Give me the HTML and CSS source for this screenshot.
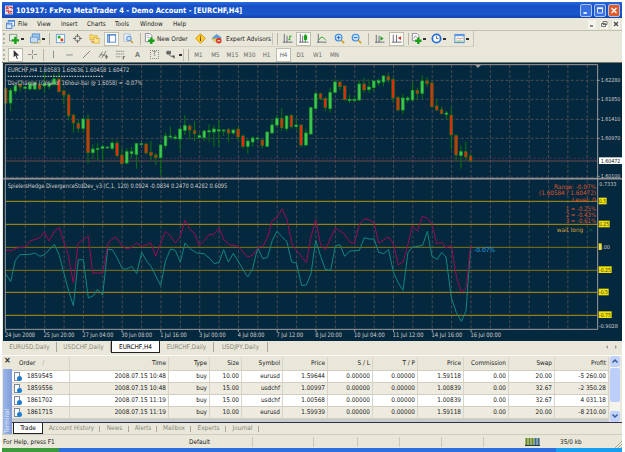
FILE: index.html
```html
<!DOCTYPE html>
<html lang="en">
<head>
    <meta charset="UTF-8">
    <title>101917: FxPro MetaTrader 4 - Demo Account - [EURCHF,H4]</title>
    <link rel="stylesheet" href="styles.css">
</head>
<body>
<div class="window">
    <div class="titlebar">
        <svg class="app-icon" viewBox="0 0 9 10"><rect width="9" height="10" fill="#e8e0f0"/><path d="M1 1l3 3M4 1L1 4M5 2h3v2M1 6h3v3M5 6l3 3M8 6L5 9" stroke="#d83a30" stroke-width="1.3" fill="none"/></svg>
        <span class="title">101917: FxPro MetaTrader 4 - Demo Account - [EURCHF,H4]</span>
        <div class="win-buttons">
            <span class="win-btn"><svg viewBox="0 0 12 12"><path d="M3 9h4" stroke="#fff" stroke-width="2"/></svg></span>
            <span class="win-btn"><svg viewBox="0 0 12 12"><path d="M3 3.5h6v5.5H3z" stroke="#fff" fill="none"/><path d="M2.5 3h7" stroke="#fff" stroke-width="1.5"/></svg></span>
            <span class="win-btn close"><svg viewBox="0 0 12 12"><path d="M3 3l6 6M9 3L3 9" stroke="#fff" stroke-width="1.6"/></svg></span>
        </div>
    </div>

    <div class="menubar">
        <svg class="menu-icon" viewBox="0 0 10 10"><rect x="2.5" y=".5" width="7" height="6" fill="#fff" stroke="#4a86d8"/><rect x=".5" y="3.5" width="6" height="6" fill="#d8e8fa" stroke="#4a86d8"/><path d="M1 4.5h5M3 1.5h6" stroke="#4a86d8"/></svg>
        <span class="m-file">File</span>
        <span class="m-view">View</span>
        <span class="m-insert">Insert</span>
        <span class="m-charts">Charts</span>
        <span class="m-tools">Tools</span>
        <span class="m-window">Window</span>
        <span class="m-help">Help</span>
        <div class="mdi-buttons">
            <span><svg viewBox="0 0 8 8"><path d="M2 6h3" stroke="#444" stroke-width="1.2"/></svg></span>
            <span><svg viewBox="0 0 8 8"><path d="M3 1.5h4v3H3zM1.5 3.500h4v3h-4z" stroke="#555" stroke-width=".8" fill="none"/></svg></span>
            <span><svg viewBox="0 0 8 8"><path d="M2 2l4 4M6 2L2 6" stroke="#444" stroke-width="1.2"/></svg></span>
        </div>
    </div>

    <div class="toolbar main">
        <i class="grip"></i>
        <span class="slot w12"><svg viewBox="0 0 12 12"><rect x=".5" y="1.500" width="8" height="7" fill="#e4f0e4" stroke="#8a9a8a"/><path d="M7 4v8M3 8h8" stroke="#18a018" stroke-width="2.6"/></svg></span>
        <i class="caret"></i>
        <span class="slot w12 gap-l"><svg viewBox="0 0 12 12"><rect x="2.500" y="1" width="8" height="6" fill="#9cc4f0" stroke="#5a90d0"/><rect x=".5" y="4.500" width="8" height="6" fill="#c0dcf8" stroke="#6a98c8"/><path d="M2 11h9V6" stroke="#d0b870" fill="none"/></svg></span>
        <i class="caret"></i>
        <i class="sep"></i>
        <span class="slot"><svg viewBox="0 0 12 12"><rect x="1.500" y="1.500" width="9" height="9" fill="#fff" stroke="#6aa0e0"/><rect x="3" y="3" width="3" height="3" fill="#28b028"/><rect x="6" y="6" width="3" height="3" fill="#e04020"/></svg></span>
        <span class="slot"><svg viewBox="0 0 12 12"><circle cx="6" cy="6" r="3" fill="none" stroke="#666"/><path d="M6 1v3.500M6 7.500V11M1 6h3.500M7.500 6H11" stroke="#666"/></svg></span>
        <span class="slot"><svg viewBox="0 0 12 12"><path d="M1 2h3l1 1h4v4H1z" fill="#f8e070" stroke="#d8a020" stroke-width=".7"/><path d="M5 5h2l1 1h3v5H5z" fill="#ffe890" stroke="#d89020" stroke-width=".7"/><path d="M2 8l1 1.500 1.500.2L3.500 11" stroke="#e07820" fill="none"/></svg></span>
        <span class="slot"><b class="pressed"><svg viewBox="0 0 12 12"><rect x="1.500" y="2" width="9" height="8" fill="#fff" stroke="#4a88d8"/><path d="M3.500 2v8" stroke="#2a60b0" stroke-width="1.3"/><path d="M1 2h10" stroke="#4a88d8" stroke-width="1.300"/></svg></b></span>
        <span class="slot"><svg viewBox="0 0 12 12"><rect x="1" y="1" width="7" height="8" fill="#e4ecf4" stroke="#a0b0c8" stroke-width=".7"/><circle cx="6.500" cy="6" r="2.500" fill="#c0e0ff" stroke="#5088c8"/><path d="M8.300 8l2.500 3" stroke="#c09020" stroke-width="1.500"/></svg></span>
        <i class="sep"></i>
        <span class="slot w12"><svg viewBox="0 0 12 12"><path d="M1.500.5h5l2 2v7h-7z" fill="#fff" stroke="#889"/><path d="M3 3h3M3 5h4" stroke="#99a" stroke-width=".7"/><path d="M8 5v7M4.500 8.500h7" stroke="#18a018" stroke-width="2.600"/></svg></span>
        <span class="label new-order">New Order</span>
        <span class="slot w16"><svg viewBox="0 0 12 12"><path d="M6 .8L11.200 6 6 11.200.8 6z" fill="#ffd030" stroke="#d09000"/><path d="M6 3v1.200M6 5v3.800" stroke="#704800" stroke-width="1.200"/></svg></span>
        <span class="slot w16"><svg viewBox="0 0 12 12"><path d="M1 6l5-4.500L11 5l-1 3-6 1z" fill="#5aa0e0" stroke="#3a78b8" stroke-width=".6"/><path d="M1 6c2 4 5 4.500 8 2L8 6z" fill="#f0c840"/><circle cx="8.500" cy="8.500" r="3" fill="#e03018"/><path d="M7 8.500h3" stroke="#fff" stroke-width="1.200"/></svg></span>
        <span class="label experts">Expert Advisors</span>
        <i class="sep double"></i>
        <span class="slot w16"><svg viewBox="0 0 12 12"><path d="M2.500 1v9h9M1 10h2M5.500 3v7" stroke="#667" fill="none"/><path d="M8.500 3v5M8.500 3.500h2M7 7h1.500" stroke="#18a018"/></svg></span>
        <span class="slot"><b class="pressed"><svg viewBox="0 0 12 12"><path d="M2.500 1v9h9M1 10h2M5 3v7" stroke="#667" fill="none"/><path d="M8 1v9" stroke="#18a018"/><rect x="6.500" y="2.500" width="3.500" height="5" fill="#18a018"/></svg></b></span>
        <span class="slot w18"><svg viewBox="0 0 12 12"><path d="M2.500 1v9h9M1 10h2" stroke="#667" fill="none"/><path d="M3 8l2.500-3.500L8 5l3 3" stroke="#30a830" fill="none"/></svg></span>
        <span class="slot w18"><svg viewBox="0 0 12 12"><circle cx="5" cy="5" r="3.700" fill="#c8e4ff" stroke="#3a88e0" stroke-width="1.200"/><path d="M3 5h4M5 3v4" stroke="#2060c0"/><path d="M8 8l3 3" stroke="#d8a020" stroke-width="2"/></svg></span>
        <span class="slot"><svg viewBox="0 0 12 12"><circle cx="5" cy="5" r="3.700" fill="#c8e4ff" stroke="#3a88e0" stroke-width="1.200"/><path d="M3 5h4" stroke="#2060c0"/><path d="M8 8l3 3" stroke="#d8a020" stroke-width="2"/></svg></span>
        <i class="sep"></i>
        <span class="slot"><svg viewBox="0 0 12 12"><path d="M2.500 2v8h9M1 10h2M5.500 3v7" stroke="#667" fill="none"/><path d="M7 3.500L10.500 6 7 8.500z" fill="#18a018"/></svg></span>
        <span class="slot"><b class="pressed"><svg viewBox="0 0 12 12"><path d="M2.500 2v8h9M1 10h2M6 2v8" stroke="#667" fill="none"/><path d="M11 3.500L7.500 5.500 11 7.500z" fill="#d03020"/></svg></b></span>
        <i class="sep"></i>
        <span class="slot w11"><svg viewBox="0 0 12 12"><path d="M1.500.5h5l2 2v6h-7z" fill="#fff" stroke="#889"/><path d="M3 6l2-3 1 2" stroke="#778" fill="none" stroke-width=".8"/><path d="M8 5v7M4.500 8.500h7" stroke="#18a018" stroke-width="2.600"/></svg></span>
        <i class="caret"></i>
        <span class="slot w11 gap-l"><svg viewBox="0 0 12 12"><circle cx="6" cy="6" r="4.500" fill="#fff" stroke="#2a70d8" stroke-width="2"/><path d="M6 3.500V6h2" stroke="#555" fill="none"/></svg></span>
        <i class="caret"></i>
        <span class="slot w12 gap-xl"><svg viewBox="0 0 12 12"><rect x="1" y="1.500" width="10" height="9" fill="#fff" stroke="#4a80c0"/><path d="M1 2.500h10" stroke="#5a98e8" stroke-width="2"/><path d="M2.500 6.500l2-1 2 1 3-1" stroke="#d06030" fill="none" stroke-width=".8"/><path d="M2.500 8.800h7" stroke="#30a050" stroke-width=".8"/></svg></span>
        <i class="caret"></i>
    </div>

    <div class="toolbar draw">
        <i class="grip"></i>
        <span class="slot w15"><b class="pressed"><svg viewBox="0 0 12 12"><path d="M4 1v8l2-1.800L7.500 11l1-.5L7.200 7H10z" fill="#333"/></svg></b></span>
        <span class="slot w18"><svg viewBox="0 0 12 12"><path d="M6 1v4M6 7v4M1 6h4M7 6h4" stroke="#888"/></svg></span>
        <i class="sep thin"></i>
        <span class="slot w16"><svg viewBox="0 0 12 12"><path d="M6 2v8" stroke="#888"/></svg></span>
        <span class="slot"><svg viewBox="0 0 12 12"><path d="M2.500 6.500h7" stroke="#888"/></svg></span>
        <span class="slot"><svg viewBox="0 0 12 12"><path d="M2 10l8-8" stroke="#777"/></svg></span>
        <span class="slot"><svg viewBox="0 0 12 12"><path d="M1 9l4-6M4 10l5-8M2 6l6 1" stroke="#777" fill="none"/><path d="M9 6v5M8 8.500h3" stroke="#555"/></svg></span>
        <span class="slot"><svg viewBox="0 0 12 12"><path d="M1 2.500h9M1 5.500h9M1 8.500h6" stroke="#888" stroke-dasharray="2 .6"/><path d="M9 8v3.500M9 8.500h2" stroke="#555"/></svg></span>
        <span class="slot glyph">A</span>
        <span class="slot glyph"><u class="text-frame">T</u></span>
        <span class="slot w15"><svg viewBox="0 0 12 12"><path d="M2 2.500h4v3H2zM4 6l4 3" fill="#666" stroke="#666"/><path d="M7 7h3.500v3.500z" fill="#444"/></svg></span>
        <i class="caret"></i>
        <i class="sep double"></i>
        <span class="slot tf">M1</span>
        <span class="slot tf">M5</span>
        <span class="slot tf">M15</span>
        <span class="slot tf">M30</span>
        <span class="slot tf">H1</span>
        <span class="slot tf"><b class="pressed">H4</b></span>
        <span class="slot tf">D1</span>
        <span class="slot tf">W1</span>
        <span class="slot tf">MN</span>
    </div>

    <svg class="chart" id="chart" viewBox="9 0 1857 834">
        <g id="price" transform="translate(0,-6)"></g>
        <g id="indicator" transform="translate(0,342)"></g>
    </svg>

    <div class="chart-tabs">
        <span class="ct">EURUSD,Daily</span>
        <span class="ct">USDCHF,Daily</span>
        <span class="ct active">EURCHF,H4</span>
        <span class="ct">EURCHF,Daily</span>
        <span class="ct">USDJPY,Daily</span>
        <span class="scroll-arrows"><i class="left"></i><i class="right"></i></span>
    </div>

    <div class="terminal">
        <div class="side"><span class="side-close">×</span><span class="side-title">Terminal</span></div>
        <div class="terminal-body">
            <div class="orders">
                <div class="table">
                    <div class="row head">
                        <span class="order">Order <em>/</em></span><span>Time</span><span>Type</span><span>Size</span><span>Symbol</span><span>Price</span><span>S / L</span><span>T / P</span><span>Price</span><span>Commission</span><span>Swap</span><span>Profit</span>
                    </div>
                    <div class="row">
                        <span class="order"><i class="doc"></i>1859545</span><span>2008.07.15 10:48</span><span>buy</span><span>10.00</span><span>eurusd</span><span>1.59644</span><span>0.00000</span><span>0.00000</span><span>1.59118</span><span>0.00</span><span>20.00</span><span>-5 260.00</span>
                    </div>
                    <div class="row">
                        <span class="order"><i class="doc"></i>1859556</span><span>2008.07.15 10:48</span><span>buy</span><span>15.00</span><span>usdchf</span><span>1.00997</span><span>0.00000</span><span>0.00000</span><span>1.00839</span><span>0.00</span><span>32.67</span><span>-2 350.28</span>
                    </div>
                    <div class="row">
                        <span class="order"><i class="doc"></i>1861702</span><span>2008.07.15 11:19</span><span>buy</span><span>15.00</span><span>usdchf</span><span>1.00568</span><span>0.00000</span><span>0.00000</span><span>1.00839</span><span>0.00</span><span>32.67</span><span>4 031.18</span>
                    </div>
                    <div class="row">
                        <span class="order"><i class="doc"></i>1861715</span><span>2008.07.15 11:19</span><span>buy</span><span>10.00</span><span>eurusd</span><span>1.59939</span><span>0.00000</span><span>0.00000</span><span>1.59118</span><span>0.00</span><span>20.00</span><span>-8 210.00</span>
                    </div>
                    <div class="summary"></div>
                </div>
                <div class="scrollbar">
                    <span class="sb-btn"><svg viewBox="0 0 8 8"><path d="M1.500 5.500L4 3l2.500 2.500" stroke="#3a5a98" stroke-width="1.500" fill="none"/></svg></span>
                    <span class="thumb"></span>
                    <span class="sb-btn bottom"><svg viewBox="0 0 8 8"><path d="M1.500 2.500L4 5l2.500-2.500" stroke="#3a5a98" stroke-width="1.500" fill="none"/></svg></span>
                </div>
            </div>
            <div class="terminal-tabs">
                <span class="tt active">Trade</span>
                <span class="tt history">Account History</span>
                <span class="tt news">News</span>
                <span class="tt alerts">Alerts</span>
                <span class="tt mailbox">Mailbox</span>
                <span class="tt exp">Experts</span>
                <span class="tt journal">Journal</span>
            </div>
        </div>
    </div>

    <div class="statusbar">
        <span class="help">For Help, press F1</span>
        <span class="profile">Default</span>
        <span class="cell c1"></span>
        <span class="cell c2"></span>
        <span class="cell c3"></span>
        <span class="cell c3"></span>
        <span class="cell c3"></span>
        <span class="cell net">
            <svg viewBox="0 0 15 8"><path d="M1.500 0v8M4.500 0v8M7.500 0v8" stroke="#6a8a28" stroke-width="2.200"/><path d="M10.500 0v8M13.500 0v8" stroke="#3a6a88" stroke-width="2.200"/><path d="M0 7.500h15" stroke="#203850"/></svg>
        </span>
        <span class="traffic">35/0 kb</span>
        <svg class="resize" viewBox="0 0 8 8"><path d="M1 8l7-7M4 8l4-4M7 8l1-1" stroke="#aaa690"/></svg>
    </div>
    <div class="taskbar"><i class="start"></i><i class="tray"></i></div>
</div>
<script src="chart.js"></script>
</body>
</html>
```
FILE: styles.css
```css
* {
    box-sizing: border-box;
}
body {
    margin: 0;
    background: #fff;
    font-family: "DejaVu Sans Condensed", "DejaVu Sans", sans-serif;
    font-size: 6.4px;
    color: #222;
    overflow: hidden;
}
svg {
    display: block;
}
i, b, em, u {
    font-style: normal;
    font-weight: normal;
    text-decoration: none;
}
.window {
    display: flex;
    flex-direction: column;
    width: 620px;
    height: 450px;
    margin: 2px 0 0 2px;
    background: #e9e7d9;
    white-space: nowrap;
}

/* title and menu */
.titlebar {
    display: flex;
    flex: 0 0 16px;
    align-items: center;
    padding: 0 2px 0 3px;
    background: linear-gradient(#2a6ce0, #1650c4 25%, #1a56cc 75%, #1444a8);
    color: #fff;
}
.app-icon {
    width: 8px;
    height: 10px;
}
.title {
    margin-left: 3px;
    font-size: 7.5px;
    font-weight: bold;
}
.win-buttons {
    display: flex;
    gap: 2px;
    margin-left: auto;
}
.win-btn {
    width: 12px;
    height: 13px;
    border: 1px solid #a8c4f4;
    border-radius: 2px;
    background: #3a70e0;
}
.win-btn svg {
    width: 10px;
    height: 11px;
}
.win-btn.close {
    background: #e05a28;
}
.menubar {
    display: flex;
    flex: 0 0 13px;
    align-items: center;
    padding-left: 4px;
    border-bottom: 1px solid #c4c1b0;
}
.menu-icon {
    width: 9px;
    height: 9px;
    margin-right: 3px;
}
.m-file { width: 19px; }
.m-view { width: 24px; }
.m-insert { width: 26px; }
.m-charts { width: 28px; }
.m-tools { width: 25px; }
.m-window { width: 33px; }
.mdi-buttons {
    display: flex;
    gap: 4px;
    margin: 0 2px 0 auto;
}
.mdi-buttons span {
    width: 8px;
    height: 9px;
    background: #f5f4ec;
}
.mdi-buttons svg {
    width: 8px;
    height: 8px;
}

/* toolbars */
.toolbar {
    display: flex;
    align-items: center;
    padding-left: 1px;
}
.toolbar.main {
    flex: 0 0 16px;
    width: 472px;
    border-right: 1px solid #c8c5b5;
    border-bottom: 1px solid #d3d0c0;
}
.toolbar.draw {
    flex: 0 0 16px;
    border-bottom: 1px solid #77746a;
}
.toolbar > * {
    flex-shrink: 0;
}
.grip {
    width: 5px;
    height: 11px;
    border-left: 2px dotted #b4b1a0;
}
.slot {
    display: flex;
    align-items: center;
    justify-content: center;
    width: 17px;
    height: 14px;
}
.slot svg {
    width: 11px;
    height: 11px;
}
.w11 { width: 11px; }
.w12 { width: 12px; }
.w15 { width: 15px; }
.w16 { width: 16px; }
.w18 { width: 18px; }
.gap-l { margin-left: 4px; }
.gap-xl { margin-left: 6px; }
.caret {
    width: 5px;
    height: 2px;
    background: linear-gradient(#333, #333) center / 3px 2px no-repeat;
}
.sep {
    width: 6px;
    height: 12px;
    background: linear-gradient(#b8b5a4, #b8b5a4) center / 1px 100% no-repeat;
}
.sep.thin {
    width: 4px;
}
.sep.double {
    width: 7px;
    background: linear-gradient(90deg, #c4c1b0 1px, transparent 1px 5px, #b4b1a0 5px 6px, transparent 6px);
}
.pressed {
    display: flex;
    align-items: center;
    justify-content: center;
    width: 15px;
    height: 14px;
    border: 1px solid #c0bdad;
    background: #fafaf6;
}
.label {
    padding-left: 2px;
    color: #222;
}
.new-order { width: 37px; }
.experts { width: 48px; }
.glyph {
    font-size: 7px;
    font-weight: bold;
    color: #777;
}
.text-frame {
    padding: 0 2px;
    border: 1px dotted #888;
    line-height: 7px;
}
.tf {
    color: #666;
    font-size: 6.2px;
}

.chart {
    flex: 0 0 278px;
    width: 619px;
    height: 278px;
    margin-left: 1px;
    background: #04293e;
    font-family: "DejaVu Sans Condensed", "DejaVu Sans", sans-serif;
    font-size: 18.5px;
}
.scale {
    font-size: 16.5px;
}

/* chart tabs */
.chart-tabs {
    display: flex;
    flex: 0 0 14px;
    padding-left: 1px;
    color: #8a8878;
}
.ct {
    width: 54px;
    height: 10px;
    margin-top: 1px;
    line-height: 11px;
    text-align: center;
    border-right: 1px solid #aaa797;
}
.ct.active {
    width: 49px;
    height: 12px;
    margin-top: 0;
    border: 1px solid #222;
    border-top: 0;
    background: #fff;
    color: #000;
    line-height: 12px;
}
.scroll-arrows {
    display: flex;
    gap: 7px;
    margin: 4px 3px 0 auto;
}
.scroll-arrows i {
    width: 0;
    height: 0;
    border: 2px solid transparent;
}
.scroll-arrows .left { border-right-color: #999; }
.scroll-arrows .right { border-left-color: #999; }

/* terminal */
.terminal {
    display: flex;
    flex: 0 0 79px;
    border-top: 1px solid #faf9f2;
}
.side {
    display: flex;
    flex-direction: column;
    width: 10px;
    padding-left: 1px;
}
.side-close {
    height: 13px;
    font-size: 9px;
    font-weight: bold;
    line-height: 8px;
    text-align: center;
}
.side-title {
    flex: 1;
    width: 9px;
    padding-top: 1px;
    background: linear-gradient(90deg, #7f9cd8, #9cb6ea);
    color: #e4ecfc;
    font-size: 6.4px;
    line-height: 9px;
    writing-mode: vertical-rl;
    transform: rotate(180deg);
}
.terminal-body {
    flex: 1;
}
.orders {
    display: flex;
    height: 67px;
    border-bottom: 1px solid #332f4a;
}
.table {
    width: 597px;
}
.row {
    display: grid;
    grid-template-columns: 58px 99px 41px 32px 41px 45px 45px 45px 46px 45px 46px 54px;
    height: 12.2px;
    border-bottom: 1px solid #d2cfc0;
    background: #fff;
    line-height: 11.5px;
}
.row:nth-child(odd) {
    background: #edebe0;
}
.row span {
    padding-right: 2px;
    border-right: 1px solid #d8d5c8;
    text-align: right;
}
.row.head {
    height: 13.5px;
    margin-top: 1px;
    background: #e9e7d9;
    line-height: 12px;
}
.row .order {
    display: flex;
    align-items: center;
    padding-left: 2px;
    text-align: left;
}
.row.head .order {
    padding-left: 7px;
}
.head em {
    margin-left: 7px;
    color: #aaa;
}
.doc {
    position: relative;
    width: 6px;
    height: 9px;
    margin-right: 7px;
    border: 1px solid #7888a0;
    background: #fff;
}
.doc:after {
    content: "";
    position: absolute;
    right: -3px;
    bottom: -1px;
    width: 5px;
    height: 5px;
    border-radius: 50%;
    background: #1c7cd0;
}
.summary {
    height: 3px;
    background: #c4ccd0;
}
.scrollbar {
    display: flex;
    flex-direction: column;
    width: 10px;
    margin-left: 1px;
    background: #f4f3ec;
}
.sb-btn {
    height: 11px;
    padding: 1px;
    border-radius: 2px;
    background: #c2d3fb;
}
.sb-btn svg {
    width: 8px;
    height: 8px;
}
.thumb {
    height: 34px;
    margin-top: 1px;
    border-radius: 2px;
    background: #bccefa;
}
.sb-btn.bottom {
    margin-top: auto;
}
.terminal-tabs {
    display: flex;
    color: #8a8878;
    line-height: 11px;
}
.tt {
    height: 11px;
    text-align: center;
}
.tt.active {
    width: 30px;
    margin-left: 1px;
    border: 1px solid #222;
    border-top: 0;
    background: #fff;
    color: #111;
}
.tt:not(.active) {
    background: linear-gradient(#aaa797, #aaa797) right 3px / 1px 6px no-repeat;
}
.tt.history { width: 57px; }
.tt.news { width: 29px; }
.tt.alerts { width: 28px; }
.tt.mailbox { width: 34px; }
.tt.exp { width: 35px; }
.tt.journal { width: 33px; }

/* status bar */
.statusbar {
    display: flex;
    flex: 0 0 14px;
    align-items: center;
    border-top: 1px solid #d0cdbc;
    padding-left: 1px;
}
.help { width: 186px; }
.profile { width: 63px; }
.cell {
    height: 10px;
    border-left: 1px solid #cbc8b8;
}
.c1 { width: 61px; }
.c2 { width: 44px; }
.c3 { width: 42px; }
.net {
    width: 77px;
    padding: 1px 0 0 41px;
}
.net svg {
    width: 15px;
    height: 8px;
}
.traffic {
    flex: 1;
}
.resize {
    align-self: flex-end;
    width: 8px;
    height: 8px;
}
.taskbar {
    display: flex;
    flex: 1;
    justify-content: space-between;
    background: #2c6fe0;
}
.start {
    width: 57px;
    background: #3c9a3c;
}
.tray {
    width: 66px;
    background: #18a0ee;
}
```
FILE: chart.js
```js
(function () {
    const NS = "http://www.w3.org/2000/svg";
    const price = document.getElementById("price");
    const indicator = document.getElementById("indicator");

    function add(parent, tag, attrs, text) {
        const el = document.createElementNS(NS, tag);
        Object.keys(attrs).forEach(key => el.setAttribute(key, attrs[key]));
        if (text) {
            el.textContent = text;
        }
        parent.appendChild(el);
    }

    function label(parent, text, x, y, width, fill, cls) {
        add(parent, "text", {
            x, y, fill, textLength: width, lengthAdjust: "spacingAndGlyphs", class: cls || "label-text"
        }, text);
    }

    function line(parent, x1, y1, x2, y2, stroke, dash) {
        add(parent, "path", {
            d: `M${x1} ${y1}L${x2} ${y2}`, stroke, "stroke-width": 3, "stroke-dasharray": dash || "none"
        });
    }

    const GRID = "#4c4a53";
    const RIGHT = 1793;

    // grid
    for (let i = 0; i < 30; i++) {
        const x = 76 + i * 58.13;
        line(price, x, 12, x, 350, GRID, "9 6");
        line(indicator, x, 10, x, 456, GRID, "9 6");
    }
    [58, 115, 175, 232, 349].forEach(y => line(price, 17, y, RIGHT, y, GRID, "9 6"));
    line(price, 17, 292, RIGHT, 292, "#5c2b4c", "6 6");
    line(price, 17, 300, RIGHT, 300, "#68494a");

    // high, body top, body bottom, low, direction
    const candles = [
        [80, 83, 126, 130, 0], [80, 88, 126, 150, 1], [70, 75, 90, 100, 1], [60, 70, 78, 92, 0],
        [75, 78, 82, 86, 1], [60, 68, 84, 88, 1], [62, 66, 84, 88, 1], [65, 70, 84, 88, 0],
        [35, 68, 75, 95, 1], [62, 68, 76, 85, 1], [38, 54, 70, 75, 1], [35, 54, 92, 95, 0],
        [85, 90, 102, 130, 0], [98, 102, 164, 178, 0], [160, 162, 186, 215, 0], [175, 187, 202, 215, 0],
        [172, 174, 202, 215, 1], [160, 174, 275, 308, 0], [250, 264, 275, 295, 1], [246, 262, 265, 298, 1],
        [250, 257, 262, 302, 1], [257, 258, 261, 262, 1], [238, 246, 262, 268, 1], [238, 246, 284, 290, 0],
        [260, 282, 308, 310, 0], [262, 272, 306, 310, 1], [258, 272, 278, 292, 1], [246, 248, 280, 323, 1],
        [247, 248, 251, 252, 1], [246, 249, 276, 280, 0], [240, 274, 283, 300, 0], [276, 282, 290, 312, 0],
        [248, 252, 290, 343, 1], [215, 225, 254, 262, 1], [196, 225, 228, 234, 1], [220, 228, 232, 238, 1],
        [200, 204, 234, 266, 1], [162, 194, 208, 222, 1], [190, 195, 207, 235, 0], [180, 209, 218, 240, 0],
        [215, 224, 229, 235, 1], [206, 210, 230, 240, 1], [190, 209, 213, 243, 1], [193, 204, 213, 258, 1],
        [178, 206, 210, 255, 1], [205, 207, 210, 225, 1], [202, 206, 216, 242, 0], [203, 207, 216, 222, 1],
        [198, 204, 228, 240, 0], [220, 225, 256, 262, 0], [235, 240, 256, 278, 1], [226, 231, 243, 258, 1],
        [231, 231, 234, 235, 1], [235, 237, 254, 262, 0], [210, 213, 256, 258, 1], [175, 192, 216, 218, 1],
        [163, 172, 192, 198, 1], [142, 172, 200, 210, 0], [163, 165, 203, 212, 1], [160, 163, 197, 202, 0],
        [170, 192, 197, 205, 1], [190, 192, 252, 258, 0], [203, 216, 252, 256, 1], [138, 140, 219, 221, 1],
        [95, 98, 142, 146, 1], [95, 98, 112, 118, 0], [108, 112, 140, 150, 0], [80, 94, 143, 155, 1],
        [55, 63, 94, 98, 1], [60, 63, 77, 88, 0], [73, 75, 116, 120, 0], [100, 115, 119, 126, 1],
        [105, 115, 119, 122, 1], [58, 69, 117, 120, 1], [50, 69, 87, 95, 0], [55, 78, 86, 96, 1],
        [57, 60, 80, 92, 1], [52, 59, 66, 75, 1], [42, 45, 63, 77, 1], [35, 47, 57, 66, 0],
        [50, 55, 111, 124, 0], [105, 110, 147, 150, 0], [98, 111, 147, 160, 1], [105, 111, 117, 125, 1],
        [62, 88, 117, 120, 1], [80, 88, 97, 115, 0], [43, 60, 97, 113, 1], [48, 60, 67, 77, 0],
        [62, 66, 137, 140, 0], [115, 135, 147, 150, 0], [137, 146, 158, 160, 0], [150, 156, 160, 175, 1],
        [140, 162, 222, 265, 0], [220, 224, 282, 300, 0], [253, 272, 283, 323, 1], [242, 272, 288, 298, 0],
        [278, 285, 300, 303, 0]
    ];
    candles.forEach(([high, top, bottom, low, up], i) => {
        const x = 17 + i * 14.53;
        line(price, x, high, x, low, "#087408");
        add(price, "rect", {
            x: x - 4, y: top, width: 8, height: bottom - top,
            fill: up ? "#3fc94f" : "#f0260c", stroke: up ? "#1fa02b" : "#28760f", "stroke-width": 2
        });
    });

    // indicator levels
    [[73, "#b2920f"], [142, "#b2920f"], [211, "#857412"], [280, "#857412"], [346, "#b2920f"], [415, "#b2920f"]]
        .forEach(([y, color]) => line(indicator, 17, y, RIGHT, y, color));

    add(indicator, "polyline", {
        fill: "none", stroke: "#12857f", "stroke-width": 3,
        points: "17,290 32,314 46,250 60,233 90,232 104,228 120,238 135,232 163,202 178,235 192,290 206,342 220,386 " +
            "235,248 250,248 265,363 280,356 292,337 308,354 323,217 337,218 351,242 367,275 380,276 395,268 410,290 " +
            "425,226 440,252 453,268 482,326 497,250 512,216 526,220 541,255 555,198 570,215 590,228 612,230 630,245 " +
            "643,260 657,256 671,218 685,255 700,229 743,300 758,275 773,212 788,245 802,242 817,190 831,163 845,178 " +
            "861,195 875,255 889,258 905,326 919,324 933,290 947,190 962,238 976,277 992,280 1006,207 1020,203 " +
            "1034,238 1049,222 1078,220 1093,182 1107,186 1122,186 1136,226 1151,230 1166,218 1180,285 1195,318 " +
            "1209,340 1224,226 1237,211 1268,205 1282,163 1296,238 1312,247 1325,226 1338,240 1354,362 1369,407 " +
            "1384,433 1398,402 1406,290 1412,210"
    });
    add(indicator, "polyline", {
        fill: "none", stroke: "#9a0a55", "stroke-width": 3,
        points: "17,220 35,220 50,213 76,210 90,192 120,182 133,165 147,192 163,162 178,152 190,190 205,235 220,318 " +
            "235,198 265,178 278,288 308,288 325,196 342,182 350,182 367,208 380,216 397,210 409,198 425,208 453,198 " +
            "467,238 482,198 497,163 510,175 526,198 540,180 555,130 569,155 584,170 598,205 615,188 627,173 643,171 " +
            "657,153 673,190 690,204 715,208 743,240 758,235 775,211 790,206 803,180 816,132 830,122 846,96 861,128 " +
            "877,205 919,257 933,180 947,128 962,205 976,218 1006,153 1030,168 1049,194 1063,200 1078,142 1093,126 " +
            "1107,128 1122,137 1136,198 1165,180 1180,200 1195,264 1209,255 1222,210 1237,146 1252,162 1267,118 " +
            "1282,123 1296,142 1310,200 1325,196 1338,213 1354,205 1369,298 1384,345 1398,335 1405,270 1412,205"
    });

    // panel frames
    const FRAME = "#a09a9c";
    add(price, "path", {d: `M16 352V11H${RIGHT}V352`, fill: "none", stroke: FRAME, "stroke-width": 3});
    line(price, 10, 352, 1866, 352, FRAME);
    line(indicator, 10, 6, 1866, 6, FRAME);
    add(indicator, "path", {d: `M16 6V457H${RIGHT}V6`, fill: "none", stroke: FRAME, "stroke-width": 3});
    add(price, "path", {d: "M1415 12h18l-9 9z", fill: "#999", transform: "translate(10,0)"});

    // texts
    const TEXT = "#d6cdcd";
    label(price, "EURCHF,H4  1.60583 1.60636 1.60458 1.60472", 23, 32, 365, TEXT);
    line(price, 23, 46, 310, 46, TEXT, "5 3");
    label(price, "DayChange (close of 16hour-bar @ 1.6058) = -0.07%", 23, 73, 404, TEXT);
    label(indicator, "SpielersHedge DivergenceStdDev_v3 (C,1, 120)  0.0924 -0.0834 0.2470 0.4282 0.6095", 23, 34, 659, TEXT);

    [["1.62280", 58], ["1.61850", 115], ["1.61410", 175], ["1.60970", 232], ["1.60100", 346]].forEach(([text, y]) => {
        line(price, RIGHT, y, RIGHT + 6, y, FRAME);
        label(price, text, 1802, y + 6, 59, TEXT, "scale");
    });
    add(price, "rect", {x: 1797, y: 289, width: 69, height: 20, fill: "#fff"});
    label(price, "1.60472", 1802, 305, 59, "#111", "scale");

    label(indicator, "0.7333", 1798, 28, 51, TEXT, "scale");
    [["0.5", 72, 24], ["0.25", 141, 33], ["-0.25", 278, 39], ["-0.5", 345, 30], ["-0.75", 413, 39]].forEach(([text, y, w]) => {
        add(indicator, "rect", {x: 1796, y: y - 10, width: w, height: 20, fill: "#f2e20c"});
        label(indicator, text, 1797, y + 6, w - 3, "#4a4308", "scale");
    });
    add(indicator, "rect", {x: 1796, y: 199, width: 9, height: 20, fill: "#f2e20c"});
    label(indicator, "0.00", 1797, 216, 33, TEXT, "scale");
    label(indicator, "-0.9028", 1796, 452, 58, TEXT, "scale");

    const RANGE = "#df542c";
    label(indicator, "Range: -0.07%", 1662, 37, 126, RANGE);
    label(indicator, "(1.60584 / 1.60472)", 1617, 55, 171, RANGE);
    label(indicator, "Level: 0", 1716, 74, 72, RANGE);
    label(indicator, "1 = -0.25%", 1697, 101, 91, RANGE);
    label(indicator, "2 = -0.43%", 1697, 119, 91, RANGE);
    label(indicator, "3 = -0.61%", 1697, 137, 91, RANGE);
    label(indicator, "wait long", 1670, 164, 80, "#d8a030");
    label(indicator, ">", 1766, 166, 12, "#1c7d1c");
    label(indicator, "-0.07%", 1422, 224, 64, "#21a0e6");

    ["24 Jun 2008", "25 Jun 20:00", "27 Jun 04:00", "30 Jun 08:00", "1 Jul 16:00", "3 Jul 00:00", "4 Jul 08:00",
        "7 Jul 12:00", "8 Jul 20:00", "10 Jul 04:00", "11 Jul 12:00", "14 Jul 16:00", "16 Jul 00:00"
    ].forEach((text, i) => {
        const x = 15 + i * 116.35;
        line(indicator, x + 2, 457, x + 2, 465, FRAME);
        label(indicator, text, x, 481, text.length > 11 ? 92 : i ? 80 : 90, TEXT);
    });
})();
```
